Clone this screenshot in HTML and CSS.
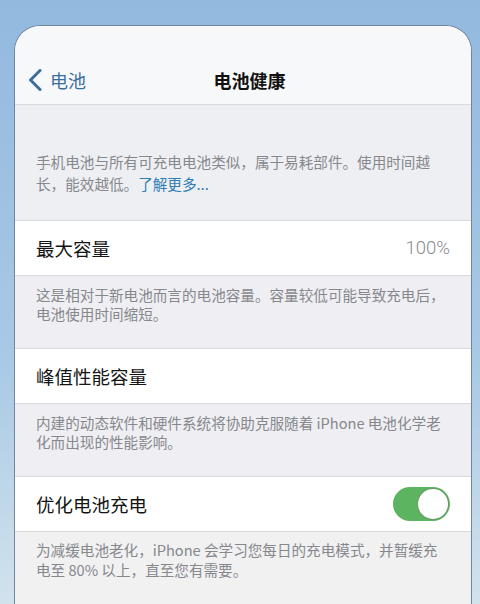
FILE: index.html
```html
<!DOCTYPE html>
<html lang="zh-CN">
	<head>
		<title>电池健康</title>
		<meta charset="utf-8" name="viewport" content="width=device-width, initial-scale=1">
		<link rel="stylesheet" href="styles.css">
	</head>
	<body>
		<div class="screen">
			<div class="navbar">
				<a class="back" href="#">
					<svg width="14" height="22" viewBox="0 0 14 22"><path d="M12 1.5 L2.5 11 L12 20.5" fill="none" stroke="currentColor" stroke-width="3" stroke-linecap="round" stroke-linejoin="round"/></svg>
					<span>电池</span>
				</a>
				<span class="navtitle">电池健康</span>
				<span></span>
			</div>

			<div class="desc intro">
				手机电池与所有可充电电池类似，属于易耗部件。使用时间越<br>
				长，能效越低。<a class="more" href="#">了解更多...</a>
			</div>

			<div class="row">
				<span class="label">最大容量</span>
				<span class="value">100%</span>
			</div>
			<div class="desc">
				这是相对于新电池而言的电池容量。容量较低可能导致充电后，<br>
				电池使用时间缩短。
			</div>

			<div class="row">
				<span class="label">峰值性能容量</span>
			</div>
			<div class="desc">
				内建的动态软件和硬件系统将协助克服随着 iPhone 电池化学老<br>
				化而出现的性能影响。
			</div>

			<div class="row">
				<span class="label">优化电池充电</span>
				<span class="switch on"><span class="knob"></span></span>
			</div>
			<div class="desc last">
				为减缓电池老化，iPhone 会学习您每日的充电模式，并暂缓充<br>
				电至 80% 以上，直至您有需要。
			</div>
		</div>
	</body>
</html>
```

FILE: styles.css
```css
* {box-sizing: border-box}

/* Global variables */
:root {
	--sep: #d9dadf;
	--grey-text: #86888c;
	--ios-blue: #3c6e9b;
	--ios-green: #5cb360;
}

body, html {
	height: 100%;
	margin: 0;
	font-family: "Noto Sans CJK SC", "Noto Sans", sans-serif;
}

body {
	background: linear-gradient(#93b9df, #a9c9e5 60%, #d2e2ed);
	overflow: hidden;
}

/* The phone screen */
.screen {
	margin: 25px 8px 0 14px;
	height: 579px;
	border: 1px solid #71859c;
	border-bottom: none;
	border-radius: 26px 26px 0 0;
	overflow: hidden;
	background-color: #efeff3;
}

/* Navigation bar */
.navbar {
	display: grid;
	grid-template-columns: 1fr auto 1fr;
	align-items: center;
	height: 79px;
	padding: 29px 0 0 13px;
	background-color: #f7f8fa;
	border-bottom: 1px solid var(--sep);
}
.back {
	display: flex;
	align-items: center;
	gap: 8px;
	color: var(--ios-blue);
	text-decoration: none;
	font-size: 18px;
}
.navtitle {
	font-size: 18px;
	font-weight: 600;
	color: #111;
}

/* Grey footnotes under each row */
.desc {
	padding: 9px 21px 25px;
	font-size: 14.6px;
	line-height: 19px;
	color: var(--grey-text);
	white-space: nowrap;
}
.intro {
	padding-top: 46px;
	padding-bottom: 25px;
	line-height: 22px;
	background-color: #eeeff3;
}
.more {
	color: #2f7db3;
	text-decoration: none;
}
.last {
	padding-top: 8px;
	line-height: 20px;
	background-color: #f1f1f2;
	height: 100%;
}

/* Table rows */
.row {
	display: flex;
	align-items: center;
	justify-content: space-between;
	height: 56px;
	padding: 0 21px;
	background-color: white;
	border-top: 1px solid var(--sep);
	border-bottom: 1px solid var(--sep);
}
.label {
	font-size: 18.5px;
	color: #141414;
}
.value {
	font-family: Roboto, "Liberation Sans", sans-serif;
	font-weight: 300;
	font-size: 18.5px;
	color: #8a8b8f;
}

/* Toggle switch */
.switch {
	display: flex;
	align-items: center;
	justify-content: flex-end;
	width: 57px;
	height: 34px;
	padding: 2px;
	border-radius: 17px;
	background-color: var(--ios-green);
}
.knob {
	width: 30px;
	height: 30px;
	border-radius: 50%;
	background-color: white;
	box-shadow: 0 0 0 1px #6a9c68;
}
```
